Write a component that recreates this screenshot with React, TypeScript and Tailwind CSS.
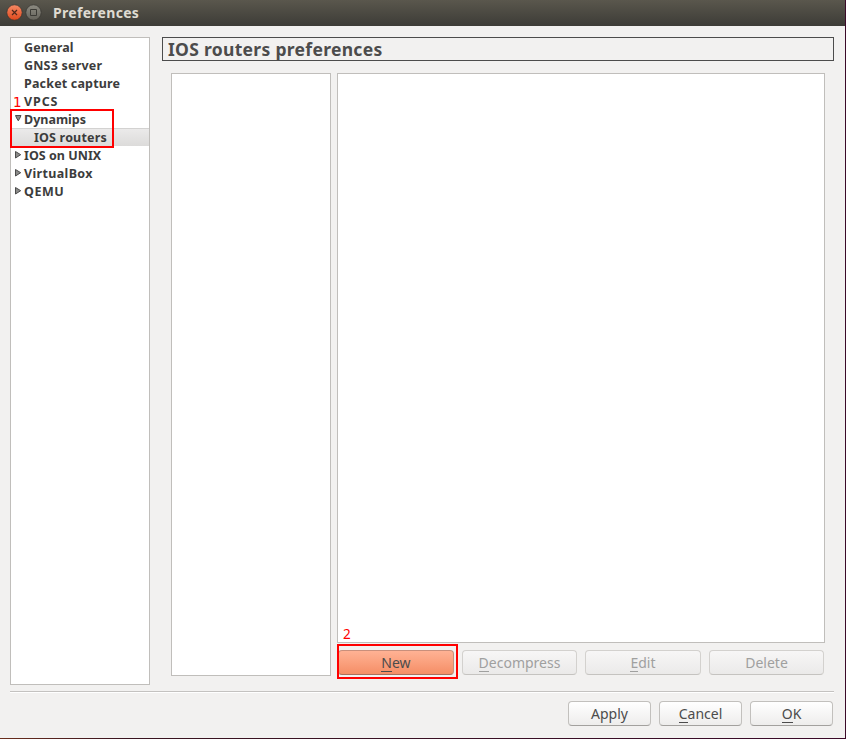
import type { ReactNode } from "react";

type TreeItem = {
  label: string;
  tracking: string;
  arrow?: "open" | "closed";
  child?: boolean;
};

const items: TreeItem[] = [
  { label: "General", tracking: "tracking-[0.15px]" },
  { label: "GNS3 server", tracking: "tracking-[0.2px]" },
  { label: "Packet capture", tracking: "tracking-[0.17px]" },
  { label: "VPCS", tracking: "tracking-[0.9px]" },
  { label: "Dynamips", tracking: "tracking-[0px]", arrow: "open" },
  { label: "IOS routers", tracking: "tracking-[0.18px]", child: true },
  { label: "IOS on UNIX", tracking: "tracking-[0.03px]", arrow: "closed" },
  { label: "VirtualBox", tracking: "tracking-[0.35px]", arrow: "closed" },
  { label: "QEMU", tracking: "tracking-[0.5px]", arrow: "closed" },
];

function Arrow({ kind }: { kind?: "open" | "closed" }) {
  return (
    <svg className="h-[18px] w-[13px] shrink-0" viewBox="0 0 13 18">
      {kind === "open" && (
        <path d="M4.5 5.5h5.5l-1.2 2.7-1.5 2.6-1.6-2.6z" fill="#8b8b89" stroke="#4c4c4c" />
      )}
      {kind === "closed" && (
        <path d="M4.5 5.5l5.2 3.2-5.2 3.3z" fill="#8b8b89" stroke="#4c4c4c" />
      )}
    </svg>
  );
}

function Key({ children, dim }: { children: ReactNode; dim?: boolean }) {
  return (
    <span className={`h-[21px] border-b ${dim ? "border-[#a0a09f]" : "border-[#4c4c4c]"}`}>
      {children}
    </span>
  );
}

function Button({
  children,
  width,
  variant = "normal",
}: {
  children: ReactNode;
  width: string;
  variant?: "normal" | "disabled" | "hot";
}) {
  const styles = {
    normal:
      "border-[#c2c0bd] border-b-[#a3a19e] bg-linear-to-b from-white to-[#eeedec] text-[#4c4c4c]",
    disabled:
      "border-[#d3d1ce] border-b-[#c5c3c0] bg-linear-to-b from-[#f7f6f6] to-[#ebeae9] text-[#a0a09f]",
    hot: "border-[#c98f7b] border-b-[#a8705c] bg-linear-to-b from-[#ffb294] to-[#f58e66] text-[#4c4c4c]",
  }[variant];
  return (
    <button
      className={`flex h-[25px] shrink-0 justify-center rounded-[4px] border text-[14px] leading-[23px] ${width} ${styles}`}
    >
      {children}
    </button>
  );
}

export default function App() {
  return (
    <div className="h-[739px] w-[846px] overflow-hidden bg-linear-to-r from-[#6b2f1c] via-[#3a1420] via-15% to-[#3b0a29] pr-px pb-px font-['Noto_Sans',sans-serif]">
      <div className="relative flex h-[738px] w-[845px] flex-col bg-[#f2f1f0]">
        <header className="flex h-[26px] shrink-0 items-center bg-linear-to-b from-[#5a574d] to-[#3d3c37] pl-1.5">
          <svg className="h-[26px] w-[38px]" viewBox="0 0 38 26">
            <defs>
              <linearGradient id="close" x2="0" y2="1">
                <stop stopColor="#f58a65" />
                <stop offset="1" stopColor="#e0481c" />
              </linearGradient>
              <linearGradient id="max" x2="0" y2="1">
                <stop stopColor="#8d8b82" />
                <stop offset="1" stopColor="#65635b" />
              </linearGradient>
            </defs>
            <circle cx="8.5" cy="12.5" r="7.7" fill="url(#close)" stroke="#35342f" strokeWidth="0.7" />
            <path d="M6 10l5 5M11 10l-5 5" stroke="#51281b" strokeWidth="1.2" />
            <circle cx="27.5" cy="12.5" r="7.7" fill="url(#max)" stroke="#35342f" strokeWidth="0.7" />
            <path d="M24.5 9.5h6v6h-6z" fill="none" stroke="#3c3b36" />
          </svg>
          <h1 className="ml-[9px] text-[14px] leading-[26px] font-bold tracking-[0.3px] text-[#dfdbd2]">
            Preferences
          </h1>
        </header>

        <main className="mt-[11px] flex h-[648px] shrink-0 gap-3 pr-[11px] pl-2.5">
          <nav className="w-[140px] shrink-0 border border-[#c0bebb] bg-white text-[12.5px] leading-5 font-bold text-[#3c3c3c]">
            {items.map((item) => (
              <div
                key={item.label}
                className={`flex h-[18px] whitespace-nowrap ${
                  item.child
                    ? "border-t border-[#d3d2d1] bg-linear-to-b from-[#ebeaea] to-[#dcdbda] pl-2.5 leading-[17px]"
                    : ""
                }`}
              >
                <Arrow kind={item.arrow} />
                <span className={item.tracking}>{item.label}</span>
              </div>
            ))}
          </nav>

          <section className="flex w-[672px] flex-col">
            <h2 className="h-6 border border-[#4c4c4c] pl-[5px] text-[17.5px] leading-[23px] font-bold tracking-[0.3px] text-[#4c4c4c]">
              IOS routers preferences
            </h2>
            <div className="mt-3 flex gap-1.5 px-[9px]">
              <div className="h-[603px] w-[160px] shrink-0 border border-[#c0bebb] bg-white" />
              <div className="flex w-[488px] flex-col">
                <div className="h-[570px] border border-[#c0bebb] bg-white" />
                <div className="mt-[7px] flex justify-between px-px">
                  <Button width="w-[116px]" variant="hot">
                    <Key>N</Key>ew
                  </Button>
                  <Button width="w-[115px]" variant="disabled">
                    <Key dim>D</Key>ecompress
                  </Button>
                  <Button width="w-[116px]" variant="disabled">
                    <Key dim>E</Key>dit
                  </Button>
                  <Button width="w-[115px]" variant="disabled">
                    Delete
                  </Button>
                </div>
              </div>
            </div>
          </section>
        </main>

        <div className="mt-1.5 mr-[11px] ml-2.5 h-0.5 shrink-0 border-t border-[#c4c2c0] bg-white" />
        <footer className="mt-2 flex justify-end gap-2 pr-3">
          <Button width="w-[83px]">Apply</Button>
          <Button width="w-[83px]">
            <Key>C</Key>ancel
          </Button>
          <Button width="w-[83px]">
            <Key>O</Key>K
          </Button>
        </footer>

        <span className="absolute top-[93px] left-[13px] font-['DejaVu_Sans',sans-serif] text-[13.5px] leading-[18px] text-[#ff0000]">
          1
        </span>
        <div className="absolute top-[109px] left-[10px] h-[39px] w-[104px] border-2 border-[#ff0000]" />
        <span className="absolute top-[625px] left-[343px] text-[13.5px] leading-[18px] text-[#ff0000]">2</span>
        <div className="absolute top-[644px] left-[337px] h-[35px] w-[121px] border-2 border-[#ff0000]" />
      </div>
    </div>
  );
}
